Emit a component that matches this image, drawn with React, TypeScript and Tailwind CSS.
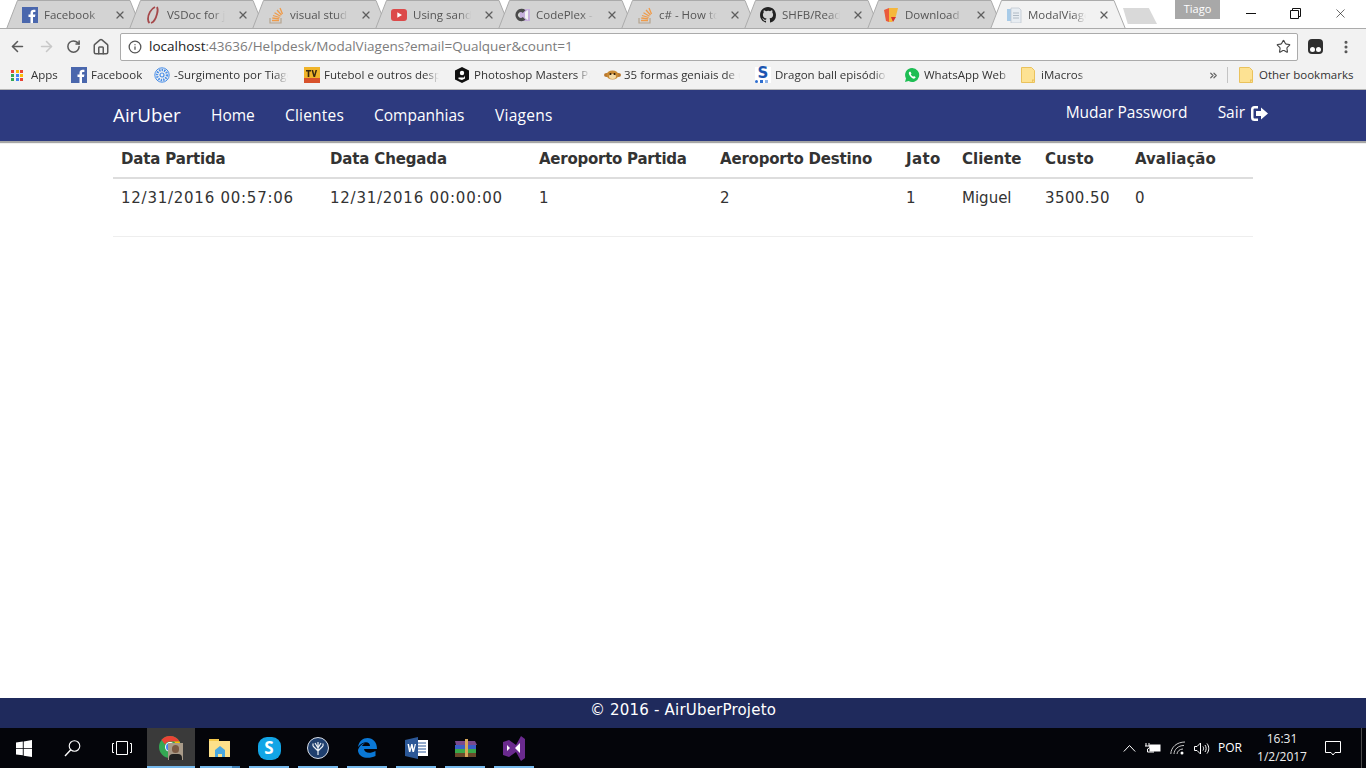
import { ArrowLeft, ArrowRight, ChevronsRight, EllipsisVertical, Home, Info, RotateCw, Star, X } from 'lucide-react';
import type { ReactNode } from 'react';

const CHROME_FONT = 'font-["Open_Sans","Noto_Sans",sans-serif]';
const PAGE_FONT = 'font-["DejaVu_Sans",Verdana,sans-serif]';

function FacebookIcon() {
  return (
    <svg width="16" height="16" viewBox="0 0 16 16">
      <rect width="16" height="16" fill="#4a67ad" />
      <path d="M11 16V10h2l.4-2.4H11V6.2c0-.8.3-1.2 1.2-1.2h1.2V2.8C13 2.7 12.300 2.700 11.600 2.700 9.800 2.700 8.500 3.800 8.500 5.900v1.700H6.500V10h2v6z" fill="#fff" />
    </svg>
  );
}

function VsDocIcon() {
  return (
    <svg width="16" height="18" viewBox="0 0 16 18" fill="none" stroke="#a5484a" strokeWidth="1.800">
      <path d="M10 1C6 3 3 8 3 13c0 2 .5 3 1.500 4" />
      <path d="M12 1c1 2 1 4 0 7-1 4-3 8-6 9" />
    </svg>
  );
}

function StackIcon() {
  return (
    <svg width="16" height="17" viewBox="0 0 16 17" fill="none">
      <path d="M2 11v5h11v-5" stroke="#b5a48f" strokeWidth="1.200" />
      <path d="M4 13.500h7M4.300 11l7 .8M5 8.500l6.600 2M6.500 5.800l6 3.400M9 3l4.500 5M12 1l2.500 6" stroke="#ef9b4a" strokeWidth="1.300" />
    </svg>
  );
}

function YoutubeIcon() {
  return (
    <svg width="16" height="16" viewBox="0 0 16 16">
      <rect y="2" width="16" height="12" rx="3" fill="#dc4a4a" />
      <path d="M6.300 5.200 11 8l-4.700 2.800z" fill="#fff" />
    </svg>
  );
}

function CodePlexIcon() {
  return (
    <svg width="16" height="16" viewBox="0 0 16 16">
      <path d="M6 2h10v12H6z" fill="#c7b0dc" />
      <path d="M11 5l3-2v10l-3-2z" fill="#f2f2f2" />
      <path d="M11.500 3.200A6.200 6.200 0 1 0 11.500 12.800L8.800 10a2.800 2.800 0 1 1 0-4z" fill="#4a4a4a" />
    </svg>
  );
}

function GithubIcon() {
  return (
    <svg width="16" height="16" viewBox="0 0 16 16" fill="#222">
      <path d="M8 0C3.580 0 0 3.580 0 8c0 3.540 2.290 6.530 5.470 7.590.4.070.55-.17.55-.38v-1.340c-2.230.48-2.700-1.070-2.700-1.070-.36-.92-.890-1.170-.890-1.170-.73-.5.050-.49.050-.49.800.06 1.230.82 1.230.82.720 1.220 1.870.870 2.330.670.070-.52.280-.870.510-1.070-1.780-.2-3.640-.89-3.640-3.950 0-.870.31-1.590.820-2.150-.08-.2-.36-1.020.08-2.120 0 0 .670-.21 2.200.82A7.700 7.700 0 0 1 8 3.870c.68 0 1.360.09 2 .27 1.530-1.040 2.200-.82 2.200-.82.440 1.100.160 1.920.08 2.120.51.560.82 1.270.82 2.150 0 3.070-1.870 3.750-3.650 3.950.29.250.54.730.54 1.480v2.190c0 .210.15.460.55.380A8.010 8.010 0 0 0 16 8c0-4.420-3.580-8-8-8z" />
    </svg>
  );
}

function DownloadIcon() {
  return (
    <svg width="16" height="16" viewBox="0 0 16 16">
      <path d="M1 3 6 1v14l-3-1z" fill="#ea5a3c" />
      <path d="M6 1h9l-2 8-4 6H6z" fill="#f5b73c" />
      <path d="M8 10l5 0-3 5z" fill="#d8342c" />
    </svg>
  );
}

function PageIcon() {
  return (
    <svg width="16" height="16" viewBox="0 0 16 16">
      <path d="M1 2h5v12H1z" fill="#a8cbe8" />
      <path d="M5 1h8l2 2v13H5z" fill="#e8edf2" stroke="#c0c8d0" strokeWidth=".8" />
      <path d="M7 6h6M7 8.500h6M7 11h6" stroke="#b0bac4" />
    </svg>
  );
}

function AppsIcon() {
  const colours = ['#ea4335', '#fbbc05', '#ea4335', '#34a853', '#4285f4', '#fbbc05', '#34a853', '#4285f4', '#ea4335'];
  return (
    <div className="grid w-[13px] grid-cols-3 gap-[1px]">
      {colours.map((c, i) => (
        <span key={i} className="h-[3px] w-[3px]" style={{ background: c }} />
      ))}
    </div>
  );
}

function SurgimentoIcon() {
  return (
    <svg width="16" height="16" viewBox="0 0 16 16" fill="none" stroke="#4a8fe8">
      <circle cx="8" cy="8" r="7.200" />
      <circle cx="8" cy="8" r="5" strokeDasharray="1.500 1" strokeWidth="2.400" />
      <circle cx="8" cy="8" r="2" strokeWidth="1.200" />
    </svg>
  );
}

function TvIcon() {
  return (
    <svg width="16" height="16" viewBox="0 0 16 16">
      <rect width="16" height="16" fill="#f0b429" />
      <rect y="11" width="16" height="5" fill="#d8522c" />
      <path d="M2 3h5v1.500H5.300V10H3.700V4.500H2zM7.500 3h1.600l1.200 4.500L11.500 3h1.600l-2 7H9.500z" fill="#3a2a10" />
    </svg>
  );
}

function PhotoshopMastersIcon() {
  return (
    <svg width="16" height="16" viewBox="0 0 16 16">
      <path d="M8 0l7 3.500v9L8 16l-7-3.500v-9z" fill="#111" />
      <circle cx="8" cy="6" r="2.200" fill="#fff" />
      <path d="M4.500 10.500h5.500l1-2v3l-3 1.500-3.500-1z" fill="#fff" />
    </svg>
  );
}

function MonkeyIcon() {
  return (
    <svg width="17" height="16" viewBox="0 0 17 16">
      <ellipse cx="2.500" cy="8" rx="2.500" ry="2" fill="#b9762c" />
      <ellipse cx="14.500" cy="8" rx="2.500" ry="2" fill="#b9762c" />
      <ellipse cx="8.500" cy="8" rx="6" ry="4.500" fill="#c98a34" />
      <ellipse cx="8.500" cy="9.500" rx="3.500" ry="2.500" fill="#f3d9a4" />
      <circle cx="6.500" cy="7" r="1" fill="#2a1a08" />
      <circle cx="10.500" cy="7" r="1" fill="#2a1a08" />
    </svg>
  );
}

function DragonIcon() {
  return (
    <div className="relative flex h-4 w-4 items-start justify-center bg-white">
      <span className={`text-[15px] font-bold leading-[13px] text-[#1d56b0] ${PAGE_FONT}`}>S</span>
      <span className="absolute bottom-0 left-0 h-[3px] w-[3px] rounded-full bg-[#2f6fd0]" />
      <span className="absolute bottom-0 left-[5px] h-[3px] w-[3px] bg-[#2f6fd0]" />
      <span className="absolute bottom-0 left-[10px] h-[3px] w-[3px] bg-[#8fb3e8]" />
    </div>
  );
}

function WhatsappIcon() {
  return (
    <svg width="16" height="16" viewBox="0 0 16 16">
      <path d="M8 1a7 7 0 0 0-6 10.500L1 15l3.600-1A7 7 0 1 0 8 1z" fill="#1ebe54" />
      <path d="M5.500 4.500c-1 1-1 2.500.5 4.500s3.500 3 4.500 2.500 1.200-1.200 1-1.500l-1.500-1-.8.700c-1-.400-2-1.500-2.400-2.400l.7-.8-1-1.700c-.2-.2-.5-.3-1 .200z" fill="#fff" />
    </svg>
  );
}

function FolderIcon() {
  return (
    <svg width="14" height="16" viewBox="0 0 14 16">
      <path d="M.5.500h10l3 3v12H.500z" fill="#fde293" stroke="#eac25c" />
      <path d="M11 15.500v-3h2.500z" fill="#eac25c" />
    </svg>
  );
}

const TABS: { title: string; icon: ReactNode; active?: boolean }[] = [
  { title: 'Facebook', icon: <FacebookIcon /> },
  { title: 'VSDoc for jQuery', icon: <VsDocIcon /> },
  { title: 'visual studio', icon: <StackIcon /> },
  { title: 'Using sandcastle', icon: <YoutubeIcon /> },
  { title: 'CodePlex - Project', icon: <CodePlexIcon /> },
  { title: 'c# - How to use', icon: <StackIcon /> },
  { title: 'SHFB/Readme', icon: <GithubIcon /> },
  { title: 'Download Help', icon: <DownloadIcon /> },
  { title: 'ModalViagens', icon: <PageIcon />, active: true },
];

const BOOKMARKS: { label: string; icon: ReactNode; width: string; text: string }[] = [
  { label: 'Apps', icon: <AppsIcon />, width: 'w-[60px]', text: 'w-[36px]' },
  { label: 'Facebook', icon: <FacebookIcon />, width: 'w-[83px]', text: 'w-[58px]' },
  { label: '-Surgimento por Tiago', icon: <SurgimentoIcon />, width: 'w-[150px]', text: 'w-[114px]' },
  { label: 'Futebol e outros desportos', icon: <TvIcon />, width: 'w-[150px]', text: 'w-[115px]' },
  { label: 'Photoshop Masters Para', icon: <PhotoshopMastersIcon />, width: 'w-[150px]', text: 'w-[116px]' },
  { label: '35 formas geniais de usar', icon: <MonkeyIcon />, width: 'w-[151px]', text: 'w-[116px]' },
  { label: 'Dragon ball episódio 1', icon: <DragonIcon />, width: 'w-[149px]', text: 'w-[112px]' },
  { label: 'WhatsApp Web', icon: <WhatsappIcon />, width: 'w-[117px]', text: 'w-[86px]' },
  { label: 'iMacros', icon: <FolderIcon />, width: 'w-[80px]', text: 'w-[44px]' },
];

const COLUMNS = [
  { label: 'Data Partida', value: '12/31/2016 00:57:06', width: 'w-[209px]', cell: 'tracking-[0.75px]', head: 'tracking-[-0.15px]' },
  { label: 'Data Chegada', value: '12/31/2016 00:00:00', width: 'w-[209px]', cell: 'tracking-[0.75px]', head: 'tracking-[-0.15px]' },
  { label: 'Aeroporto Partida', value: '1', width: 'w-[181px]', cell: '', head: 'tracking-[-0.25px]' },
  { label: 'Aeroporto Destino', value: '2', width: 'w-[186px]', cell: '', head: 'tracking-[-0.2px]' },
  { label: 'Jato', value: '1', width: 'w-[56px]', cell: '', head: 'tracking-[0.4px]' },
  { label: 'Cliente', value: 'Miguel', width: 'w-[83px]', cell: '', head: '' },
  { label: 'Custo', value: '3500.50', width: 'w-[90px]', cell: 'tracking-[0.4px]', head: 'tracking-[0.2px]' },
  { label: 'Avaliação', value: '0', width: 'w-[126px]', cell: '', head: '' },
];

function BrowserTab({ title, icon, active }: { title: string; icon: ReactNode; active?: boolean }) {
  return (
    <div className={`relative -mr-[13px] h-[29px] w-[136px] shrink-0 ${active ? 'z-10' : ''}`}>
      <svg className="absolute inset-0" width="136" height="29" viewBox="0 0 136 29">
        <path d="M.5 29 11.500 .5H124L135.500 29z" fill={active ? '#f2f2f2' : '#d3d3d3'} stroke="#ababab" />
        {!active && <path d="M0 28.500H136" stroke="#ababab" />}
        {active && <path d="M2 29H134" stroke="#f2f2f2" strokeWidth="2" />}
      </svg>
      <div className="relative flex h-[28px] items-center pl-[16px] pt-[2px]">
        <span className="flex w-[22px] shrink-0 items-center">{icon}</span>
        <span className="w-[58px] overflow-hidden whitespace-nowrap text-[11.5px] text-[#555] [mask-image:linear-gradient(to_right,black_78%,transparent)]">
          {title}
        </span>
        <X className="ml-[12px] text-[#5f5f5f]" size={12} strokeWidth={2.500} />
      </div>
    </div>
  );
}

function TabStrip() {
  return (
    <div className={`flex h-[28px] shrink-0 overflow-hidden bg-white pl-[6px] ${CHROME_FONT}`}>
      {TABS.map(t => (
        <BrowserTab key={t.title} {...t} />
      ))}
      <div className="ml-[10px] mt-[8px] h-[16px] w-[34px] shrink-0 bg-[#d9d9d9] [clip-path:polygon(0_0,76%_0,100%_100%,14%_100%)]" />
      <div className="ml-[18px] flex h-[19px] w-[45px] shrink-0 items-center justify-center bg-[#a8a8a8] text-[11px] text-white">
        Tiago
      </div>
      <div className="ml-auto flex h-[27px] items-center text-[#111]">
        <span className="flex w-[45px] justify-center">
          <span className="h-[1px] w-[10px] bg-[#111]" />
        </span>
        <span className="flex w-[45px] justify-center">
          <svg width="11" height="11" viewBox="0 0 11 11" fill="none" stroke="#111">
            <path d="M.5 2.500h8v8h-8zM2.500 2.500v-2h8v8h-2" />
          </svg>
        </span>
        <span className="flex w-[48px] justify-center pr-[3px]">
          <X size={15} strokeWidth={1} />
        </span>
      </div>
    </div>
  );
}

function Toolbar() {
  return (
    <div className={`flex h-[33px] shrink-0 items-center border-t border-[#ababab] bg-[#f2f2f2] pt-[3px] ${CHROME_FONT}`}>
      <ArrowLeft className="ml-[9px] text-[#5a5a5a]" size={17} strokeWidth={2.200} />
      <ArrowRight className="ml-[12px] text-[#c8c8c8]" size={17} strokeWidth={2.200} />
      <RotateCw className="ml-[11px] text-[#5a5a5a]" size={15} strokeWidth={2.400} />
      <Home className="ml-[11px] text-[#5a5a5a]" size={18} strokeWidth={2} />
      <div className="ml-[10px] flex h-[28px] w-[1178px] items-center rounded-[2px] border border-[#ababab] bg-white pl-[7px] pr-[6px] text-[13.5px]">
        <Info className="text-[#555]" size={14} strokeWidth={2.200} />
        <span className="ml-[7px] text-[#222]">localhost</span>
        <span className="text-[#7c7c7c]">:43636/Helpdesk/ModalViagens?email=Qualquer&amp;count=1</span>
        <Star className="ml-auto text-[#444]" size={15} strokeWidth={1.800} />
      </div>
      <div className="ml-[10px] flex h-[15px] w-[15px] items-end justify-center gap-[1px] rounded-[4px] bg-[#2f2f2f] pb-[2px]">
        <span className="h-[5px] w-[5px] rounded-full bg-white" />
        <span className="h-[5px] w-[5px] rounded-full bg-white" />
      </div>
      <EllipsisVertical className="ml-[15px] text-[#555]" size={16} strokeWidth={2.600} />
    </div>
  );
}

function BookmarksBar() {
  return (
    <div className={`flex h-[29px] shrink-0 items-center border-b border-[#b5b5b5] bg-[#f2f2f2] pl-[11px] text-[11.5px] text-[#333] ${CHROME_FONT}`}>
      {BOOKMARKS.map(b => (
        <div key={b.label} className={`flex shrink-0 items-center ${b.width}`}>
          <span className="flex w-[20px] shrink-0 items-center">{b.icon}</span>
          <span className={`overflow-hidden whitespace-nowrap [mask-image:linear-gradient(to_right,black_88%,transparent)] ${b.text}`}>
            {b.label}
          </span>
        </div>
      ))}
      <ChevronsRight className="ml-[107px] text-[#666]" size={11} strokeWidth={2.600} />
      <span className="ml-[8px] h-[16px] w-[1px] bg-[#c4c4c4]" />
      <div className="ml-[11px] flex items-center">
        <span className="flex w-[20px] items-center">
          <FolderIcon />
        </span>
        <span className="whitespace-nowrap">Other bookmarks</span>
      </div>
    </div>
  );
}

function NavBar() {
  return (
    <nav className={`relative z-10 flex h-[51px] shrink-0 items-center bg-[#2d3a7f] pl-[113px] pr-[98px] text-[15.5px] text-white shadow-[0_2px_1px_rgba(0,0,0,0.35)] ${CHROME_FONT}`}>
      <span className="w-[98px] text-[18.8px]">AirUber</span>
      <span className="w-[74px]">Home</span>
      <span className="w-[89px] tracking-[0.2px]">Clientes</span>
      <span className="w-[121px]">Companhias</span>
      <span className="tracking-[0.25px]">Viagens</span>
      <span className="ml-auto -mt-[6px] w-[152px]">Mudar Password</span>
      <span className="-mt-[5px] flex items-center gap-[6px]">
        Sair
        <svg width="17" height="15" viewBox="0 0 17 15" fill="#fff">
          <path d="M7 0H3.500A3.500 3.500 0 0 0 0 3.500v8A3.500 3.500 0 0 0 3.500 15H7v-2.500H3.500a1 1 0 0 1-1-1v-8a1 1 0 0 1 1-1H7z" />
          <path d="M10 1.500 17 7.500l-7 6V10H5V5h5z" />
        </svg>
      </span>
    </nav>
  );
}

function TripsTable() {
  return (
    <div className="flex-1 bg-white pl-[113px]">
      <table className={`w-[1140px] table-fixed border-collapse text-[15px] text-[#333] ${PAGE_FONT}`}>
        <thead>
          <tr className="h-[37px] border-b-2 border-[#ddd]">
            {COLUMNS.map(c => (
              <th key={c.label} className={`px-2 text-left font-bold whitespace-nowrap ${c.width} ${c.head}`}>
                {c.label}
              </th>
            ))}
          </tr>
        </thead>
        <tbody>
          <tr className="h-[58px] border-b border-[#eee]">
            {COLUMNS.map(c => (
              <td key={c.label} className={`px-2 pt-[8px] align-top whitespace-nowrap ${c.cell}`}>
                {c.value}
              </td>
            ))}
          </tr>
        </tbody>
      </table>
    </div>
  );
}

function ChromeTaskIcon() {
  return (
    <div className="relative h-[24px] w-[24px]">
      <svg width="22" height="22" viewBox="0 0 22 22">
        <circle cx="11" cy="11" r="11" fill="#34a853" />
        <path d="M11 0a11 11 0 0 1 9.500 5.500H11a5.500 5.500 0 0 0-5 3L2.500 3.800A11 11 0 0 1 11 0z" fill="#ea4335" />
        <path d="M20.500 5.500A11 11 0 0 1 11 22l5-8.500a5.500 5.500 0 0 0-1-8z" fill="#fbbc05" />
        <circle cx="11" cy="11" r="5" fill="#fff" />
        <circle cx="11" cy="11" r="4" fill="#4285f4" />
      </svg>
      <div className="absolute bottom-0 right-0 h-[17px] w-[15px] overflow-hidden bg-[#a89a88]">
        <div className="mx-auto mt-[2px] h-[8px] w-[7px] rounded-full bg-[#7a5a44]" />
        <div className="mx-auto mt-[1px] h-[6px] w-[13px] rounded-t-[4px] bg-[#222]" />
      </div>
    </div>
  );
}

const TASK_ICONS: { key: string; icon: ReactNode; split?: boolean }[] = [
  {
    key: 'explorer',
    split: true,
    icon: (
      <svg width="22" height="20" viewBox="0 0 22 20">
        <path d="M0 1h8l2 2h11v16H0z" fill="#fde08a" />
        <path d="M0 3h10V1H0z" fill="#f4c84c" />
        <path d="M6 19v-7l5-4 5 4v7h-3v-3H9v3z" fill="#4aa8e0" />
      </svg>
    ),
  },
  {
    key: 'skype',
    icon: (
      <div className={`flex h-[23px] w-[23px] items-center justify-center rounded-[9px] bg-[#12a5e6] text-[17px] font-bold text-white ${CHROME_FONT}`}>
        S
      </div>
    ),
  },
  {
    key: 'tree',
    icon: (
      <svg width="22" height="22" viewBox="0 0 22 22" fill="none">
        <circle cx="11" cy="11" r="10.500" fill="#1f3f6e" stroke="#d8dee8" />
        <path d="M11 18V5M11 14 6 9M11 14l5-5M11 11 8 6M11 11l3-5M6 9V6.500M16 9V6.500" stroke="#e8eef4" strokeWidth="1.200" />
      </svg>
    ),
  },
  {
    key: 'edge',
    icon: (
      <svg width="20" height="22" viewBox="0 0 20 22">
        <path d="M1 10C2 4 6 1 10.500 1 16 1 20 5 20 12H7c.3 4 6 5 11.500 2v5c-6 3-16 3-17.500-5C1 11 4 7 8 6c-2 1.500-3 2.500-3 3h8c0-4-6-6-12 1z" fill="#0a78d6" />
      </svg>
    ),
  },
  {
    key: 'word',
    icon: (
      <svg width="23" height="22" viewBox="0 0 23 22">
        <path d="M9 3h14v16H9z" fill="#fff" />
        <path d="M13 6h8M13 9h8M13 12h8M13 15h8" stroke="#2b5797" />
        <path d="M0 3l13-3v22L0 19z" fill="#2b5797" />
        <path d="M2.500 7h1.500l1 5 1.200-5h1.300l1.200 5 1-5h1.300L9 15H7.500l-1-4.500L5.400 15H4z" fill="#fff" />
      </svg>
    ),
  },
  {
    key: 'rar',
    icon: (
      <svg width="24" height="20" viewBox="0 0 24 20">
        <path d="M2 3h20l2 4H3z" fill="#7a4a8e" />
        <path d="M2 7h21v4H2z" fill="#3a5ec8" />
        <path d="M2 11h21v4H2z" fill="#3aa84a" />
        <path d="M2 15h21v4H2z" fill="#6a4a2a" />
        <path d="M12 1h3v18h-3z" fill="#d8a85a" />
      </svg>
    ),
  },
  {
    key: 'vs',
    icon: (
      <svg width="22" height="26" viewBox="0 0 22 26">
        <path d="M0 7l6-2 7 5 5-9 4 3v19l-4 3-5-9-7 5-6-2z" fill="#6a2a8e" />
        <path d="M4 10v6l3-3zM17 8l-5 5 5 5z" fill="#fff" />
      </svg>
    ),
  },
];

function TaskBar() {
  return (
    <div className={`relative flex h-[40px] shrink-0 items-center bg-[#04050a] text-white ${CHROME_FONT}`}>
      <span className="flex w-[47px] justify-center">
        <svg width="16" height="17" viewBox="0 0 16 17" fill="#fff">
          <path d="M0 2.500 6.800 1.500v6.400H0zM7.700 1.400 16 0v7.900H7.700zM0 8.800h6.800v6.500L0 14.400zM7.700 8.800H16V17l-8.300-1.300z" />
        </svg>
      </span>
      <span className="flex w-[50px] justify-center">
        <svg width="17" height="17" viewBox="0 0 17 17" fill="none" stroke="#fff" strokeWidth="1.100">
          <circle cx="10.500" cy="6" r="5.300" />
          <path d="M6.800 9.800 1 16" strokeWidth="1.400" />
        </svg>
      </span>
      <span className="flex w-[50px] justify-center">
        <svg width="20" height="14" viewBox="0 0 20 14" fill="none" stroke="#fff">
          <path d="M4.500.5h11v13h-11zM2 2.500H.5v9H2M18 2.500h1.500v9H18" />
        </svg>
      </span>
      <span className="relative flex h-full w-[48px] items-center justify-center bg-[#3a3a3a]">
        <ChromeTaskIcon />
        <span className="absolute inset-x-0 bottom-0 h-[2px] bg-[#76b9ed]" />
      </span>
      {TASK_ICONS.map(t => (
        <span key={t.key} className="relative ml-[5px] mr-[4px] flex h-full w-[40px] items-center justify-center first:ml-[5px]">
          {t.icon}
          <span className="absolute inset-x-0 bottom-0 h-[2px] bg-[#76b9ed]" />
          {t.split && <span className="absolute bottom-0 right-0 h-[2px] w-[8px] bg-[#3f7fb5]" />}
        </span>
      ))}
      <div className="ml-auto flex h-full items-center">
        <svg width="13" height="8" viewBox="0 0 13 8" fill="none" stroke="#fff">
          <path d="M.8 7.500 6.500 1.500l5.700 6" />
        </svg>
        <svg className="ml-[9px]" width="16" height="10" viewBox="0 0 16 10" fill="none" stroke="#fff">
          <path d="M1 0v3M4 0v3M0 3h5v1.500L2.500 6v3H9" />
          <rect x="5" y="2" width="10" height="6" fill="#fff" />
        </svg>
        <svg className="ml-[9px]" width="17" height="14" viewBox="0 0 17 14" fill="none" stroke="#c8c8c8">
          <path d="M.8 13C1 6 7 1 15 1M4 13c.2-4.500 4-8.500 10-8.500M7 13c.2-2.500 2.500-5 6-5" />
          <circle cx="12" cy="12" r="1.500" fill="#fff" stroke="none" />
        </svg>
        <svg className="ml-[7px]" width="16" height="13" viewBox="0 0 16 13" fill="none" stroke="#fff">
          <path d="M.5 4.500h2.500L6.500 1v11L3 8.500H.5z" />
          <path d="M9 4.500c.8 1.200.8 2.800 0 4M11 3c1.500 2 1.500 5 0 7M13 1.500c2.300 3 2.300 7 0 10" />
        </svg>
        <span className="ml-[5px] w-[30px] text-center text-[12px]">POR</span>
        <div className="ml-[6px] w-[62px] text-center text-[12px] leading-[18px] text-[#f0f0f0]">
          <div>16:31</div>
          <div>1/2/2017</div>
        </div>
        <svg className="ml-[12px]" width="16" height="15" viewBox="0 0 16 15" fill="none" stroke="#fff">
          <path d="M.5.500h15v11H10L8 14l-2-2.500H.5z" />
        </svg>
        <span className="ml-[20px] h-full w-[1px] bg-[#4a4a4a]" />
        <span className="w-[4px]" />
      </div>
    </div>
  );
}

export default function App() {
  return (
    <div className="flex h-screen flex-col overflow-hidden bg-white">
      <TabStrip />
      <Toolbar />
      <BookmarksBar />
      <NavBar />
      <TripsTable />
      <footer className={`flex h-[30px] shrink-0 items-center justify-center bg-[#1f2a5c] pb-[6px] text-[15px] tracking-[0.2px] text-white ${PAGE_FONT}`}>
        © 2016 - AirUberProjeto
      </footer>
      <TaskBar />
    </div>
  );
}
